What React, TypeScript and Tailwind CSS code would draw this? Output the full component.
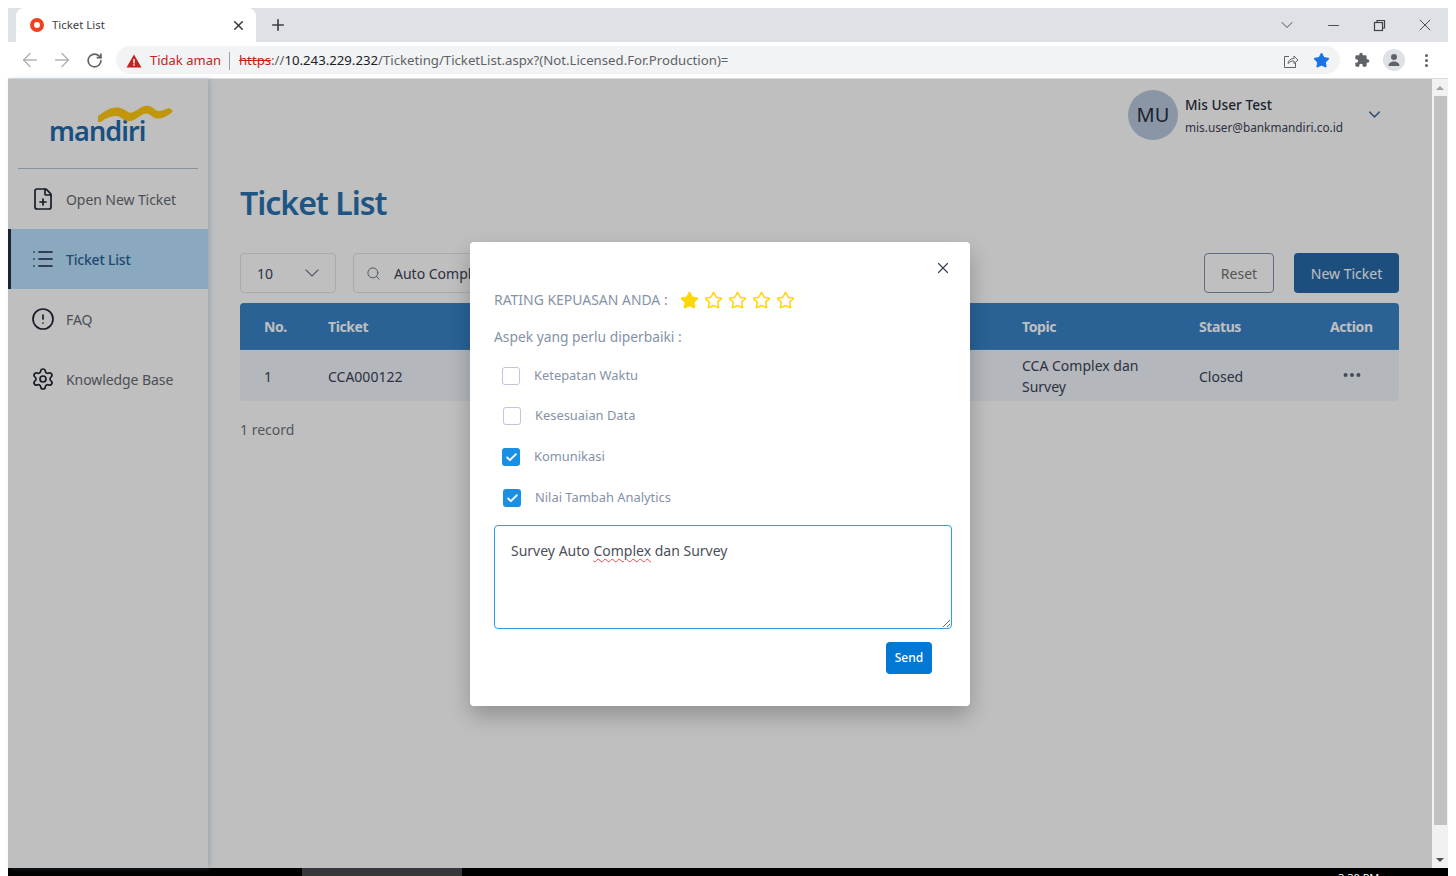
import { ArrowLeft, ArrowRight, Check, ChevronDown, CircleAlert, Ellipsis, FilePlus, List, Minus, Plus, RotateCw, Search, Settings, Star, X } from "lucide-react";

function ChromeBar() {
  return (
    <div className="shrink-0">
      {/* tab strip */}
      <div className="flex h-[34px] items-stretch bg-[#dee1e6] pl-2">
        <div className="flex w-[240px] items-center rounded-t-lg bg-white pl-[14px] pr-[10px] text-[11.4px] text-[#3c4043]">
          <span className="flex h-[14px] w-[14px] items-center justify-center rounded-full bg-[#f13f1f]">
            <span className="h-[6px] w-[6px] rounded-full bg-white" />
          </span>
          <span className="ml-2 flex-1">Ticket List</span>
          <X className="h-[15px] w-[15px] text-[#3c4043]" strokeWidth={2.6} />
        </div>
        <div className="flex items-center pl-[13px]">
          <Plus className="h-[18px] w-[18px] text-[#3c4043]" strokeWidth={2.2} />
        </div>
        <div className="flex flex-1 items-center justify-end text-[#3c4043]">
          <span className="flex w-[46px] justify-center"><ChevronDown className="h-5 w-5" strokeWidth={1.1} /></span>
          <span className="flex w-[46px] justify-center"><Minus className="h-[17px] w-[17px]" strokeWidth={1.3} /></span>
          <span className="flex w-[46px] justify-center">
            <svg className="h-[15px] w-[15px]" viewBox="0 0 15 15" fill="none" stroke="currentColor" strokeWidth="1.2">
              <rect x="2.500" y="4.500" width="8" height="8" />
              <path d="M5 4.500V2.500h7.500V10h-2" />
            </svg>
          </span>
          <span className="flex w-[46px] justify-center"><X className="h-5 w-5" strokeWidth={1.1} /></span>
        </div>
      </div>
      {/* toolbar */}
      <div className="flex h-[37px] items-start border-b border-[#dadce0] bg-white pt-1">
        <div className="flex h-7 w-[108px] items-center pl-[6px] text-[#b0b3b8]">
          <span className="flex w-8 justify-center"><ArrowLeft className="h-[22px] w-[22px]" strokeWidth={1.6} /></span>
          <span className="flex w-8 justify-center"><ArrowRight className="h-[22px] w-[22px]" strokeWidth={1.6} /></span>
          <span className="flex w-8 justify-center"><RotateCw className="h-[17px] w-[17px] text-[#5f6368]" strokeWidth={2.4} /></span>
        </div>
        <div className="flex h-7 w-[1224px] items-center rounded-full bg-[#f1f3f4] pl-[10px] pr-[10px] pt-px text-[13.2px]">
          <svg className="h-4 w-4" viewBox="0 0 16 16">
            <path d="M8 1.500 15.500 14.500H.5Z" fill="#c5221f" />
            <path d="M7.300 6h1.400v4.500H7.300zM7.300 11.300h1.400v1.400H7.300z" fill="#fff" />
          </svg>
          <span className="ml-2 text-[13px] text-[#c5221f]">Tidak aman</span>
          <span className="ml-2 mr-[9px] h-[18px] w-px bg-[#9aa0a6]" />
          <span className="text-[#c5221f] line-through">https</span>
          <span className="text-[#5f6368]">://</span>
          <span className="text-[#202124]">10.243.229.232</span>
          <span className="text-[#5f6368]">/Ticketing/TicketList.aspx?(Not.Licensed.For.Production)=</span>
          <span className="flex-1" />
          <svg className="h-4 w-4 text-[#5f6368]" viewBox="0 0 16 16" fill="none" stroke="currentColor" strokeWidth="1">
            <path d="M6 3.500H1.500v11h11V10" />
            <path d="M5 10.500c.3-3 2.500-5 6-5V3l4 4-4 3.500V8c-2.500 0-4.500.8-6 2.500Z" />
          </svg>
          <Star className="ml-[14px] h-[17px] w-[17px] fill-[#1a73e8] text-[#1a73e8]" strokeWidth={1.5} />
        </div>
        <div className="flex h-7 flex-1 items-center pl-[14px] text-[#5f6368]">
          <svg className="h-4 w-4" viewBox="0 0 24 24" fill="currentColor">
            <path d="M20.500 11H19V7a2 2 0 0 0-2-2h-4V3.500a2.500 2.500 0 0 0-5 0V5H4a2 2 0 0 0-2 2v3.800h1.500a2.700 2.700 0 0 1 0 5.400H2V20a2 2 0 0 0 2 2h3.800v-1.500a2.700 2.700 0 0 1 5.400 0V22H17a2 2 0 0 0 2-2v-4h1.500a2.500 2.500 0 0 0 0-5Z" />
          </svg>
          <span className="ml-[13px] flex h-[22px] w-[22px] items-center justify-center rounded-full bg-[#dee1e6]">
            <svg className="h-[14px] w-[14px]" viewBox="0 0 14 14" fill="currentColor">
              <circle cx="7" cy="4" r="3" />
              <path d="M1.500 13c0-3 2.500-4.500 5.500-4.500s5.500 1.500 5.500 4.500Z" />
            </svg>
          </span>
          <span className="ml-[20px] flex flex-col gap-[2px]">
            <span className="h-[3px] w-[3px] rounded-full bg-current" />
            <span className="h-[3px] w-[3px] rounded-full bg-current" />
            <span className="h-[3px] w-[3px] rounded-full bg-current" />
          </span>
        </div>
      </div>
    </div>
  );
}

const navItems = [
  { label: "Open New Ticket", icon: FilePlus, active: false },
  { label: "Ticket List", icon: List, active: true },
  { label: "FAQ", icon: CircleAlert, active: false },
  { label: "Knowledge Base", icon: Settings, active: false },
];

function Sidebar() {
  return (
    <aside className="flex w-[200px] shrink-0 flex-col bg-white shadow-[2px_0_5px_rgba(110,150,190,0.3)]">
      <div className="relative mx-[10px] h-[90px] border-b border-[#b5c5d8]">
        <span className="absolute left-[31px] top-[32px] text-[27px] font-semibold leading-[40px] tracking-[-0.9px] text-[#236bac]">mandiri</span>
        <svg className="absolute left-[79px] top-[26px] h-[17px] w-[78px]" viewBox="0 0 78 20" preserveAspectRatio="none" fill="#ffc810">
          <path d="M1 13C9 6 15 2 21 3c6 1 8 5 12 6 5 1 10-8 17-8 6 0 7 6 12 6 5 0 9-4 11-3l3 3c-3 4-9 9-15 9-6 0-7-6-12-6-5 0-10 9-17 9-6 0-8-6-13-6-5 0-11 3-15 7H1Z" />
        </svg>
      </div>
      <nav className="flex flex-col">
        {navItems.map((item) => {
          const Icon = item.icon;
          return (
            <div
              key={item.label}
              className={
                item.active
                  ? "flex h-[60px] items-center border-l-[3px] border-[#27303f] bg-[#b9e2ff] pl-[20px] text-[14px] font-medium tracking-[-0.2px] text-[#2a6396]"
                  : "flex h-[60px] items-center pl-[23px] text-[14px] tracking-[-0.08px] text-[#666a72]"
              }
            >
              <Icon className="h-[24px] w-[24px] text-[#1f2735]" strokeWidth={1.7} />
              <span className="ml-[11px]">{item.label}</span>
            </div>
          );
        })}
      </nav>
    </aside>
  );
}

function Main() {
  return (
    <main className="flex min-w-0 flex-1 flex-col pl-8 pr-[33px] text-[14px] text-[#3c4257]">
      <div className="flex items-center justify-end pr-[15px] pt-[11px]">
        <span className="flex h-[50px] w-[50px] items-center justify-center rounded-full bg-[#b9c8dc] text-[20px] text-[#27303f]">MU</span>
        <div className="ml-[7px] w-[159px] pt-[2px]">
          <div className="text-[13.7px] font-medium leading-[20px] text-[#27303f]">Mis User Test</div>
          <div className="mt-[2px] whitespace-nowrap text-[11.8px] leading-[20px] text-[#3c4257]">mis.user@bankmandiri.co.id</div>
        </div>
        <ChevronDown className="mb-[2px] ml-[21px] h-[19px] w-[19px] text-[#4a6f96]" strokeWidth={1.8} />
      </div>
      <h1 className="mt-[41px] text-[32px] font-semibold leading-[44px] tracking-[-1px] text-[#2a72b0]">Ticket List</h1>
      <div className="mt-[28px] flex h-10 items-stretch">
        <div className="flex w-[96px] items-center justify-between rounded border border-[#dfe4ec] pl-4 pr-[11px]">
          <span>10</span>
          <ChevronDown className="h-6 w-6 text-[#6b7686]" strokeWidth={1.1} />
        </div>
        <div className="ml-[17px] flex w-[580px] items-center rounded border border-[#dfe4ec] pl-[12px]">
          <Search className="h-[15px] w-[15px] text-[#6b7686]" strokeWidth={1.6} />
          <span className="ml-[13px]">Auto Complex</span>
        </div>
        <div className="flex-1" />
        <button className="w-[70px] rounded border border-[#7f93ad] text-[#727272]">Reset</button>
        <button className="ml-5 w-[105px] rounded bg-[#276aa9] text-white">New Ticket</button>
      </div>
      <div className="mt-[10px] overflow-hidden rounded">
        <div className="grid h-[47px] grid-cols-[64px_694px_177px_131px_1fr] items-center border-b border-[#4a8ac6] bg-[#3883c9] pl-6 font-bold tracking-[-0.4px] text-white">
          <span>No.</span>
          <span>Ticket</span>
          <span>Topic</span>
          <span>Status</span>
          <span>Action</span>
        </div>
        <div className="grid h-[51px] grid-cols-[64px_694px_177px_131px_1fr] items-center bg-[#f0f5fa] pl-6">
          <span className="pt-[2px]">1</span>
          <span className="pt-[2px]">CCA000122</span>
          <span className="leading-[21px]">CCA Complex dan<br />Survey</span>
          <span className="pt-[2px]">Closed</span>
          <span className="flex pl-[11px] pb-[2px] text-[#5b6373]"><Ellipsis className="h-[22px] w-[22px]" strokeWidth={2.4} /></span>
        </div>
      </div>
      <div className="mt-[18px] text-[#6f7480]">1 record</div>
    </main>
  );
}

const aspects = [
  { label: "Ketepatan Waktu", checked: false, row: "mt-[20px] ml-2" },
  { label: "Kesesuaian Data", checked: false, row: "mt-[22px] ml-[9px]" },
  { label: "Komunikasi", checked: true, row: "mt-[23px] ml-2" },
  { label: "Nilai Tambah Analytics", checked: true, row: "mt-[23px] ml-[9px]" },
];

function RatingModal() {
  return (
    <div className="absolute left-[462px] top-[163px] h-[464px] w-[500px] rounded bg-white px-6 pt-[47px] shadow-[0_10px_22px_rgba(0,0,0,0.24)]">
      <X className="absolute right-[18px] top-[17px] h-[18px] w-[18px] text-[#3c4257]" strokeWidth={1.6} />
      <div className="flex h-[22px] items-center text-[13.95px] text-[#8592a6]">
        <span>RATING KEPUASAN ANDA :</span>
        <div className="ml-[12px] flex gap-[5px]">
          {[0, 1, 2, 3, 4].map((i) => (
            <Star
              key={i}
              className={i === 0 ? "h-[19px] w-[19px] fill-[#ffd60a] text-[#ffd60a]" : "h-[19px] w-[19px] text-[#ffd60a]"}
              strokeWidth={2}
            />
          ))}
        </div>
      </div>
      <div className="mt-[16px] text-[13.8px] leading-[20px] text-[#8592a6]">Aspek yang perlu diperbaiki :</div>
      {aspects.map((a) => (
        <div key={a.label} className={`flex h-[18px] items-center text-[12.9px] text-[#8592a6] ${a.row}`}>
          {a.checked ? (
            <span className="flex h-[18px] w-[18px] items-center justify-center rounded-[3px] bg-[#1a8fe3]">
              <Check className="h-[13px] w-[13px] text-white" strokeWidth={3.4} />
            </span>
          ) : (
            <span className="h-[18px] w-[18px] rounded-[3px] border border-[#bcc8da] bg-white" />
          )}
          <span className="ml-[14px]">{a.label}</span>
        </div>
      ))}
      <div className="mt-[18px] h-[104px] w-[458px] resize overflow-auto rounded border border-[#2d9cee] px-4 py-[14px] text-[14px] leading-[22px] text-[#4a4f5a]">
        Survey Auto <span className="underline decoration-[#e5484d] decoration-wavy decoration-1 underline-offset-2">Complex</span> dan Survey
      </div>
      <div className="mt-[13px] flex justify-end pr-[14px]">
        <button className="h-8 w-[46px] rounded bg-[#0078d4] text-[12px] font-medium text-white">Send</button>
      </div>
    </div>
  );
}

function Scrollbar() {
  return (
    <div className="z-10 flex w-4 shrink-0 flex-col items-center bg-[#f1f1f1]">
      <div className="flex h-[17px] items-center">
        <span className="h-0 w-0 border-x-[4px] border-b-[4px] border-x-transparent border-b-[#a3a3a3]" />
      </div>
      <div className="h-[729px] w-[13px] bg-[#c1c1c1]" />
      <div className="flex flex-1 items-end pb-[6px]">
        <span className="h-0 w-0 border-x-[4px] border-t-[4px] border-x-transparent border-t-[#505050]" />
      </div>
    </div>
  );
}

export default function App() {
  return (
    <div className="flex h-[876px] w-[1456px] flex-col overflow-hidden bg-white px-2 pt-2 font-['Noto_Sans','Open_Sans',sans-serif]">
      <ChromeBar />
      <div className="flex min-h-0 flex-1">
        <div className="relative flex min-w-0 flex-1 bg-white">
          <Sidebar />
          <Main />
          {/* dimmed backdrop */}
          <div className="absolute inset-0 bg-black/25" />
          <RatingModal />
        </div>
        <Scrollbar />
      </div>
      <div className="flex h-2 shrink-0 overflow-hidden bg-black pl-[294px] text-[11px] text-white">
        <div className="h-2 w-40 bg-[#37383b]" />
        <div className="ml-[876px] pt-[3px] leading-[14px]">3:30 PM</div>
      </div>
    </div>
  );
}
